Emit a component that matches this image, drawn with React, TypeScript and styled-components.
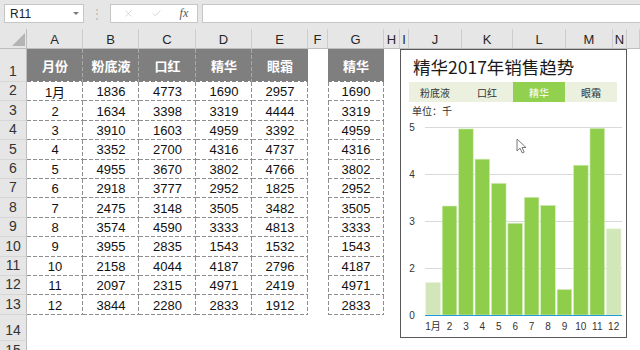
import React from "react";
import styled, { createGlobalStyle } from "styled-components";
import { X, Check } from "lucide-react";

const GlobalStyle = createGlobalStyle`
  html, body {
    margin: 0;
    padding: 0;
    background: #fff;
  }
  body {
    font-family: "Liberation Sans", "Noto Sans CJK SC", Arial, sans-serif;
    overflow: hidden;
  }
`;

const COLS =
  "27px 56px 56px 57px 56px 56px 20px 56px 16px 9px 53px 51px 53px 47px 14px 1fr";
const LETTERS = ["A", "B", "C", "D", "E", "F", "G", "H", "I", "J", "K", "L", "M", "N", ""];
const HEADS = ["月份", "粉底液", "口红", "精华", "眼霜"];
const MONTHS = ["1月", "2", "3", "4", "5", "6", "7", "8", "9", "10", "11", "12"];
const DATA = [
  [1836, 4773, 1690, 2957],
  [1634, 3398, 3319, 4444],
  [3910, 1603, 4959, 3392],
  [3352, 2700, 4316, 4737],
  [4955, 3670, 3802, 4766],
  [2918, 3777, 2952, 1825],
  [2475, 3148, 3505, 3482],
  [3574, 4590, 3333, 4813],
  [3955, 2835, 1543, 1532],
  [2158, 4044, 4187, 2796],
  [2097, 2315, 4971, 2419],
  [3844, 2280, 2833, 1912],
];
const TABS = ["粉底液", "口红", "精华", "眼霜"];

// dashed cell edges, drawn as gradients so the dash length matches excel's
const DASH = "#8e8e8e";
const hDash = (c: string) => `linear-gradient(to right, ${c} 4px, transparent 4px) left bottom / 6px 1px repeat-x`;
const vDash = (c: string, side: string) => `linear-gradient(to bottom, ${c} 4px, transparent 4px) ${side} top / 1px 6px repeat-y`;

const Frame = styled.div`
  position: relative;
  width: 640px;
  height: 350px;
  overflow: hidden;
  background: #fff;
`;

const FormulaBar = styled.div`
  display: flex;
  align-items: flex-start;
  height: 29px;
  padding: 4px 0 0 4px;
  box-sizing: border-box;
  background: #e6e6e6;
`;

const NameBox = styled.div`
  width: 80px;
  height: 19px;
  box-sizing: border-box;
  background: #fff;
  border: 1px solid #c6c6c6;
  display: flex;
  align-items: center;
  justify-content: space-between;
  padding: 0 4px 0 5px;
  font-size: 12px;
  color: #222;
`;

const Caret = styled.span`
  width: 0;
  height: 0;
  border-left: 3px solid transparent;
  border-right: 3px solid transparent;
  border-top: 3px solid #7a7a7a;
`;

const Grip = styled.div`
  width: 26px;
  height: 19px;
  display: flex;
  align-items: center;
  justify-content: center;
  color: #b8b8b8;
  font-size: 12px;
`;

const FxGroup = styled.div`
  width: 88px;
  height: 19px;
  box-sizing: border-box;
  background: #fff;
  border: 1px solid #c6c6c6;
  display: flex;
  align-items: center;
  justify-content: space-around;
  padding-left: 3px;
  color: #bdbdbd;
`;

const Fx = styled.span`
  font-family: "Liberation Serif", serif;
  font-style: italic;
  font-size: 12px;
  color: #555;
`;

const FormulaInput = styled.div`
  flex: 1;
  height: 19px;
  margin-left: 4px;
  box-sizing: border-box;
  background: #fff;
  border: 1px solid #c6c6c6;
  border-right: none;
`;

const Sheet = styled.div`
  display: flex;
  flex-direction: column;
`;

const Row = styled.div<{ $h: number }>`
  display: grid;
  grid-template-columns: ${COLS};
  height: ${(p) => p.$h}px;
  flex-shrink: 0;
`;

const Corner = styled.div`
  background: #e6e6e6;
  border-right: 1px solid #bdbdbd;
  border-bottom: 1px solid #bdbdbd;
  box-sizing: border-box;
  display: flex;
  align-items: flex-end;
  justify-content: flex-end;
  padding: 0 1px 2px 0;

  &::before {
    content: "";
    width: 0;
    height: 0;
    border-left: 13px solid transparent;
    border-bottom: 13px solid #b4b4b4;
  }
`;

const ColHead = styled.div`
  background: #e6e6e6;
  border-right: 1px solid #cdcdcd;
  border-bottom: 1px solid #bdbdbd;
  box-sizing: border-box;
  display: flex;
  align-items: center;
  justify-content: center;
  padding-top: 2px;
  font-size: 13px;
  color: #262626;
`;

const RowHead = styled.div`
  background: #e6e6e6;
  border-right: 1px solid #bdbdbd;
  border-bottom: 1px solid #d6d6d6;
  box-sizing: border-box;
  display: flex;
  align-items: flex-end;
  justify-content: center;
  padding-bottom: 2px;
  font-size: 14px;
  line-height: 16px;
  color: #333;
  overflow: hidden;
`;

const HeadCell = styled.div<{ $sep?: boolean }>`
  background: ${(p) =>
    [
      "linear-gradient(to right, transparent 4px, #fff 4px) left bottom / 6px 1px repeat-x",
      p.$sep ? vDash("#a9a9a9", "right") : null,
      "#7f7f7f",
    ]
      .filter(Boolean)
      .join(", ")};
  color: #fff;
  font-family: "Noto Sans CJK SC", sans-serif;
  font-weight: 700;
  font-size: 13px;
  display: flex;
  align-items: center;
  justify-content: center;
`;

const DataCell = styled.div<{ $boxed?: boolean }>`
  display: flex;
  align-items: center;
  justify-content: center;
  font-size: 13px;
  color: #111;
  background: ${(p) =>
    [hDash(DASH), vDash(DASH, "right"), p.$boxed ? vDash(DASH, "left") : null]
      .filter(Boolean)
      .join(", ")};
`;

const Blank = styled.div``;

const ChartBox = styled.div`
  position: absolute;
  left: 400px;
  top: 49px;
  width: 227px;
  height: 289px;
  box-sizing: border-box;
  border: 1px solid #595959;
  background: #fff;
  display: flex;
  flex-direction: column;
`;

const ChartTitle = styled.div`
  padding: 5px 0 0 12px;
  height: 24px;
  line-height: 24px;
  margin-bottom: 3px;
  font-family: "Noto Sans CJK SC", sans-serif;
  font-size: 17.5px;
  color: #1a1a1a;
  white-space: nowrap;
`;

const TabBar = styled.div`
  margin-left: 8px;
  width: 208px;
  height: 20px;
  display: grid;
  grid-template-columns: repeat(4, 1fr);
  background: #ebf1de;
`;

const Tab = styled.div<{ $active?: boolean }>`
  display: flex;
  align-items: center;
  justify-content: center;
  font-family: "Noto Sans CJK SC", sans-serif;
  font-size: 10px;
  color: ${(p) => (p.$active ? "#fff" : "#333")};
  background: ${(p) => (p.$active ? "#92d050" : "transparent")};
`;

const Unit = styled.div`
  margin: 2px 0 0 11px;
  height: 14px;
  line-height: 14px;
  font-family: "Noto Sans CJK SC", sans-serif;
  font-size: 10px;
  color: #333;
`;

const Plot = styled.svg`
  display: block;
  font-family: "Liberation Sans", "Noto Sans CJK SC", sans-serif;
`;

const Cursor = styled.svg`
  position: absolute;
  left: 516px;
  top: 138px;
`;

const SLOT = 197 / 12;
const yOf = (v: number) => 197 - (v / 1000 - 1) * 47;
const TICKS = [
  { label: "5", y: 9 },
  { label: "4", y: 56 },
  { label: "3", y: 103 },
  { label: "2", y: 150 },
  { label: "0", y: 197 },
];

function Chart() {
  const values = DATA.map((r) => r[2]);
  return (
    <ChartBox>
      <ChartTitle>精华2017年销售趋势</ChartTitle>
      <TabBar>
        {TABS.map((t) => (
          <Tab key={t} $active={t === "精华"}>
            {t}
          </Tab>
        ))}
      </TabBar>
      <Unit>单位：千</Unit>
      <Plot width={224} height={218} viewBox="0 0 224 218">
        {TICKS.slice(0, 4).map((t) => (
          <line key={t.label} x1={24} x2={221} y1={t.y + 0.5} y2={t.y + 0.5} stroke="#d9d9d9" strokeWidth={1} />
        ))}
        {TICKS.map((t) => (
          <text key={t.label} x={11} y={t.y + 4} fontSize={10} fill="#333" textAnchor="middle">
            {t.label}
          </text>
        ))}
        {values.map((v, i) => {
          const y = yOf(v);
          const faded = i === 0 || i === 11;
          return (
            <rect
              key={i}
              x={24.8 + i * SLOT}
              y={y}
              width={14.6}
              height={197 - y}
              fill={faded ? "#d1e7b9" : "#8fce4b"}
              stroke={faded ? "#e4f1d6" : "#d6ecbf"}
              strokeWidth={0.6}
            />
          );
        })}
        <line x1={24} x2={221} y1={197.5} y2={197.5} stroke="#1e9ad8" strokeWidth={1.2} />
        {MONTHS.map((m, i) => (
          <text key={m} x={24.8 + i * SLOT + 7.3} y={212} fontSize={10} fill="#333" textAnchor="middle">
            {m}
          </text>
        ))}
      </Plot>
    </ChartBox>
  );
}

function blanks(n: number, key: string) {
  return Array.from({ length: n }, (_, i) => <Blank key={`${key}${i}`} />);
}

export default function App() {
  return (
    <Frame>
      <GlobalStyle />
      <FormulaBar>
        <NameBox>
          R11
          <Caret />
        </NameBox>
        <Grip>⋮</Grip>
        <FxGroup>
          <X size={11} strokeWidth={1.3} />
          <Check size={11} strokeWidth={1.3} />
          <Fx>fx</Fx>
        </FxGroup>
        <FormulaInput />
      </FormulaBar>
      <Sheet>
        <Row $h={20}>
          <Corner />
          {LETTERS.map((l, i) => (
            <ColHead key={i}>{l}</ColHead>
          ))}
        </Row>
        <Row $h={33}>
          <RowHead>1</RowHead>
          {HEADS.map((h, i) => (
            <HeadCell key={h} $sep={i < 4}>
              {h}
            </HeadCell>
          ))}
          <Blank />
          <HeadCell>精华</HeadCell>
          {blanks(8, "h")}
        </Row>
        {DATA.map((r, ri) => (
          <Row key={ri} $h={19.42}>
            <RowHead>{ri + 2}</RowHead>
            <DataCell>{MONTHS[ri]}</DataCell>
            {r.map((v, ci) => (
              <DataCell key={ci}>{v}</DataCell>
            ))}
            <Blank />
            <DataCell $boxed>{r[2]}</DataCell>
            {blanks(8, "d")}
          </Row>
        ))}
        <Row $h={26}>
          <RowHead>14</RowHead>
          {blanks(15, "e")}
        </Row>
        <Row $h={20}>
          <RowHead>15</RowHead>
          {blanks(15, "f")}
        </Row>
      </Sheet>
      <Chart />
      <Cursor width={12} height={17} viewBox="0 0 12 17">
        <path d="M1 1 L1 13 L4 10.2 L6.3 15 L8.2 14.1 L6 9.5 L10 9.5 Z" fill="#fff" stroke="#6a6a6a" strokeWidth={0.9} strokeLinejoin="round" />
      </Cursor>
    </Frame>
  );
}
